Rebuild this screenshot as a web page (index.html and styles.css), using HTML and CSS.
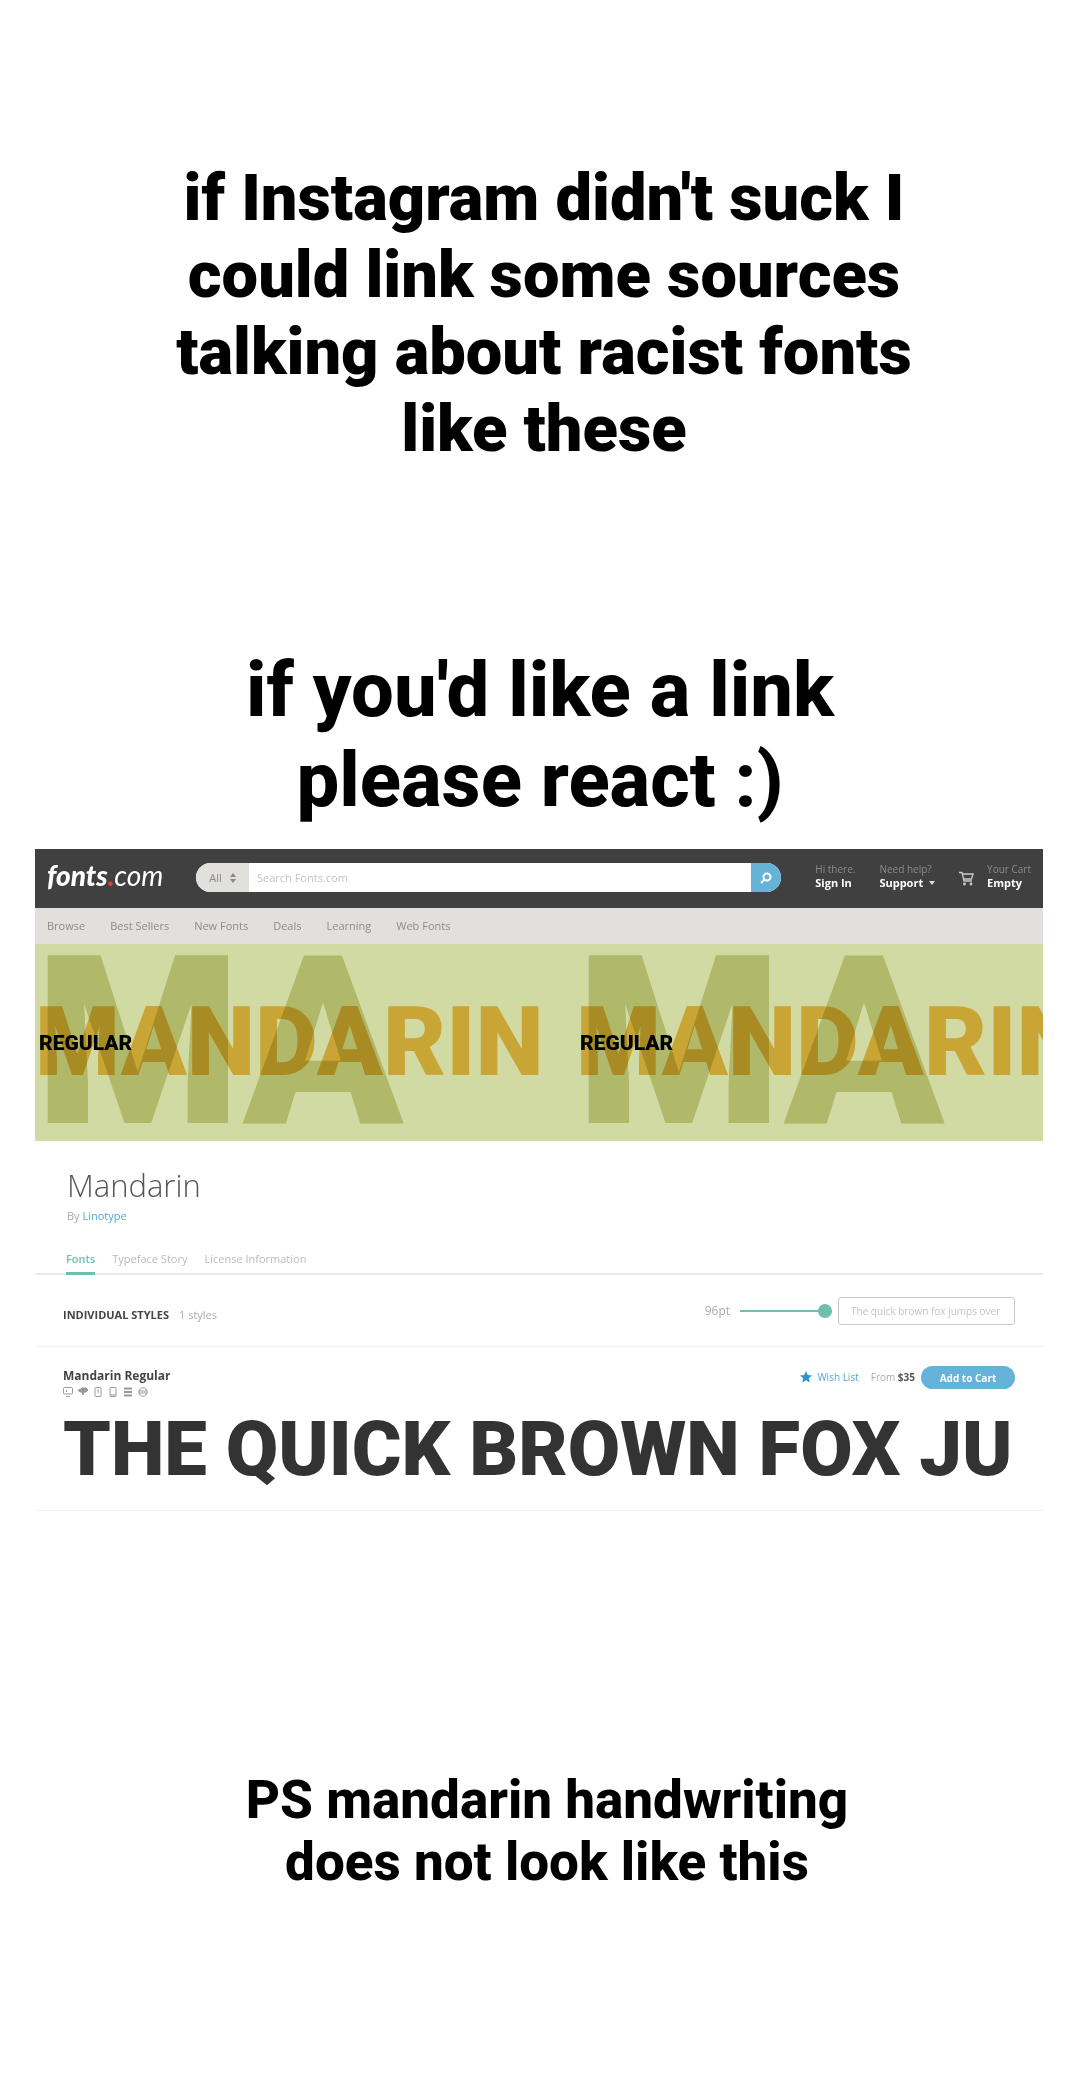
FILE: index.html
```html
<!DOCTYPE html>
<html lang="en">
<head>
<meta charset="utf-8">
<meta name="viewport" content="width=device-width, initial-scale=1">
<title>Mandarin | Fonts.com</title>
<link rel="stylesheet" href="styles.css">
</head>
<body>
<main class="story">
  <h1 class="note note-intro">if Instagram didn't suck I<br>could link some sources<br>talking about racist fonts<br>like these</h1>
  <h2 class="note note-react">if you'd like a link<br>please react :)</h2>

  <section class="site">
    <header class="topbar">
      <a class="logo" href="#"><b>fonts</b><span class="dot">.</span>com</a>
      <form class="search">
        <button class="scope" type="button">All
          <svg width="6" height="10" viewBox="0 0 6 10" aria-hidden="true"><path d="M0 4l3-4 3 4zM0 6l3 4 3-4z" fill="currentColor"/></svg>
        </button>
        <input class="query" type="text" placeholder="Search Fonts.com" aria-label="Search Fonts.com">
        <button class="go" type="submit" aria-label="Search">
          <svg width="12" height="12" viewBox="0 0 12 12" fill="none" stroke="currentColor" stroke-width="2" aria-hidden="true"><circle cx="7" cy="5" r="3.5"/><path d="M4.500 7.500L1 11" /></svg>
        </button>
      </form>
      <a class="account" href="#"><span>Hi there.</span><b>Sign In</b></a>
      <a class="account" href="#"><span>Need help?</span><b>Support <i class="caret"></i></b></a>
      <a class="cart" href="#">
        <svg width="15" height="15" viewBox="0 0 15 15" fill="none" stroke="currentColor" stroke-width="1.300" aria-hidden="true"><path d="M0 1.500h3l2 8.500h8M3.500 3h10.500l-1.500 5H4.600"/><circle cx="5.500" cy="13" r=".8"/><circle cx="12" cy="13" r=".8"/></svg>
        <span class="account"><span>Your Cart</span><b>Empty</b></span>
      </a>
    </header>

    <nav class="menu">
      <a href="#">Browse</a><a href="#">Best Sellers</a><a href="#">New Fonts</a><a href="#">Deals</a><a href="#">Learning</a><a href="#">Web Fonts</a>
    </nav>

    <div class="banner">
      <div class="tile"><span class="name">MANDARIN</span><span class="initials">MA</span><span class="style">REGULAR</span></div>
      <div class="tile"><span class="name">MANDARIN</span><span class="initials">MA</span><span class="style">REGULAR</span></div>
    </div>

    <div class="family">
      <h3>Mandarin</h3>
      <p>By <a href="#">Linotype</a></p>
    </div>
    <nav class="tabs">
      <a class="active" href="#">Fonts</a><a href="#">Typeface Story</a><a href="#">License Information</a>
    </nav>

    <div class="controls">
      <div class="summary"><h4>INDIVIDUAL STYLES</h4><span>1 styles</span></div>
      <label class="size" for="size">96pt</label>
      <input class="slider" id="size" type="range" min="12" max="96" value="96">
      <input class="preview" type="text" placeholder="The quick brown fox jumps over" aria-label="Preview text">
    </div>

    <article class="font">
      <div class="row">
        <div class="title">
          <h4>Mandarin Regular</h4>
          <div class="formats">
            <svg viewBox="0 0 10 10"><rect x=".5" y=".5" width="9" height="6.500" rx="1"/><path d="M3 9.500h4M3 3l1 1-1 1"/></svg>
            <svg viewBox="0 0 10 10"><path class="solid" d="M0 3l3-1 1-1h4l2 2-2 2H6L5 8 4 5H2z"/></svg>
            <svg viewBox="0 0 10 10"><rect x="2" y=".5" width="6" height="9" rx="1"/><path d="M4 3h2M4 5h2"/></svg>
            <svg viewBox="0 0 10 10"><rect x="2" y=".5" width="6" height="9" rx="1"/><path d="M2 8h6"/></svg>
            <svg viewBox="0 0 10 10"><path d="M1 1.500h8M1 5h8M1 8.500h8" stroke-width="2"/></svg>
            <svg viewBox="0 0 10 10"><circle cx="5" cy="5" r="4.200"/><path d="M1 4h8M1 6h8"/></svg>
          </div>
        </div>
        <a class="wish" href="#"><svg width="12" height="12" viewBox="0 0 24 24" aria-hidden="true"><path fill="currentColor" d="M12 0l3.500 8 8.500.8-6.400 5.700L19.500 23 12 18.500 4.500 23l1.900-8.500L0 8.800 8.500 8z"/></svg>Wish List</a>
        <span class="price">From <b>$35</b></span>
        <button class="add" type="button">Add to Cart</button>
      </div>
      <p class="sample">THE QUICK BROWN FOX JU</p>
    </article>
  </section>

  <p class="note note-ps">PS mandarin handwriting<br>does not look like this</p>
</main>
</body>
</html>
```
FILE: styles.css
```css
* { box-sizing: border-box; }
body { margin: 0; background: #fff; color: #000; }
h1, h2, h3, h4, p { margin: 0; font-weight: normal; }
a { color: inherit; text-decoration: none; }
button, input { font: inherit; border: 0; margin: 0; padding: 0; }
svg { display: block; }

.story { padding: 160px 37px 200px 35px; }

/* Large centred captions */
.note { font-family: Roboto, sans-serif; font-weight: 800; text-align: center; }
.note-intro { font-size: 65px; line-height: 77px; padding-left: 10px; font-weight: 900; }
.note-react { font-size: 76px; line-height: 90px; margin-top: 177px; padding-left: 2px; }
.note-ps { font-size: 53px; line-height: 62px; margin-top: 258px; padding-left: 16px; }

.site { margin-top: 24px; font: 11px/16px "Open Sans", sans-serif; color: #aaa; }

/* Dark top bar */
.topbar { display: flex; align-items: center; height: 59px; padding: 0 12px; background: #404040; color: #fff; }
.logo { width: 149px; font: italic 28px/30px Lato, sans-serif; margin-bottom: 8px; }
.logo b { font-weight: 900; }
.dot { color: #d8432f; font-weight: 900; }
.search { display: flex; flex: 1; height: 29px; margin: 0 34px 2px 0; border-radius: 15px; overflow: hidden; background: #fff; }
.scope { display: flex; align-items: center; justify-content: center; gap: 8px; width: 53px; background: #e1e0dc; color: #888; }
.query { flex: 1; min-width: 0; padding: 0 8px; background: #fff; }
.query::placeholder, .preview::placeholder { color: #c4c4c4; opacity: 1; }
.go { display: flex; align-items: center; justify-content: center; width: 30px; background: #65b3d9; color: #fff; }
.account { font-size: 10px; line-height: 13px; margin-bottom: 6px; margin-right: 24px; color: #8c8c8c; white-space: nowrap; }
.account span, .account b { display: block; }
.account b { color: #fff; font-size: 11px; }
.caret { display: inline-block; border: 3px solid transparent; border-top: 4px solid #ddd; border-bottom: 0; margin: 0 0 2px 3px; }
.cart { display: flex; align-items: center; gap: 13px; color: #ccc; }
.cart .account { margin-right: 0; }

.menu { display: flex; gap: 25px; height: 36px; padding: 10px 12px; background: #e1e0dc; color: #8c8c8c; }

/* Repeating specimen banner; the large initials tint whatever lies below them */
.banner { display: flex; height: 197px; overflow: hidden; background: #d2daa3; font-family: Roboto, sans-serif; font-weight: 900; }
.tile { display: grid; flex: none; width: 541px; height: 197px; align-items: center; }
.tile span { grid-area: 1 / 1; }
.name { font-size: 97px; line-height: 97px; color: #c9a536; }
.initials { font-size: 235px; line-height: 197px; color: #d6d7a6; mix-blend-mode: multiply; }
.style { font-size: 21px; line-height: 24px; color: #000; padding-left: 4px; }

.family { padding: 24px 32px; }
.family h3 { font-size: 31px; line-height: 40px; font-weight: 300; color: #555; }
.family p { margin-top: 3px; }
.family a { color: #4fa9d3; }

.tabs { display: flex; gap: 17px; padding: 3px 31px 0; border-bottom: 2px solid #eaeaea; color: #bbb; }
.tabs a { padding-bottom: 5px; margin-bottom: -2px; border-bottom: 3px solid transparent; }
.tabs .active { color: #6dbfb0; font-weight: 600; border-color: #6dbfb0; }

.controls { display: flex; align-items: center; height: 72px; padding: 0 28px; border-bottom: 1px solid #f2f2f2; }
h4 { font-size: 12px; line-height: 16px; font-weight: 700; color: #444; }
.summary { display: flex; gap: 10px; margin-right: auto; padding-top: 9px; }
.summary h4 { font-size: 11px; }
.size { font-size: 12px; }
.slider { appearance: none; width: 92px; height: 14px; margin: 0 6px 0 10px; background: linear-gradient(#6dbfb0, #6dbfb0) center / 100% 2px no-repeat; }
.slider::-webkit-slider-thumb { appearance: none; width: 14px; height: 14px; border-radius: 50%; background: #6dbfb0; }
.preview { width: 177px; height: 28px; padding: 0 12px; border: 1px solid #c8c8c8; border-radius: 3px; font-size: 10px; }

.font { padding: 19px 28px 22px; border-bottom: 1px solid #f2f2f2; }
.row { display: flex; align-items: flex-start; }
.title { margin-right: auto; padding-top: 2px; }
.formats { display: flex; gap: 5px; margin-top: 3px; }
.formats svg { width: 10px; height: 10px; fill: none; stroke: #999; }
.formats .solid { fill: #999; }
.wish { display: flex; align-items: center; gap: 5px; margin: 3px 12px 0 0; font-size: 10px; color: #4fa9d3; }
.wish svg { color: #2b94c8; }
.price { margin: 3px 6px 0 0; font-size: 10px; }
.price b { color: #555; }
.add { width: 94px; height: 23px; border-radius: 12px; background: #65b3d9; color: #fff; font-size: 10px; font-weight: 700; }
.sample { margin-top: 14px; overflow: hidden; white-space: nowrap; font: 900 76px/77px Roboto, sans-serif; color: #333; }
```
